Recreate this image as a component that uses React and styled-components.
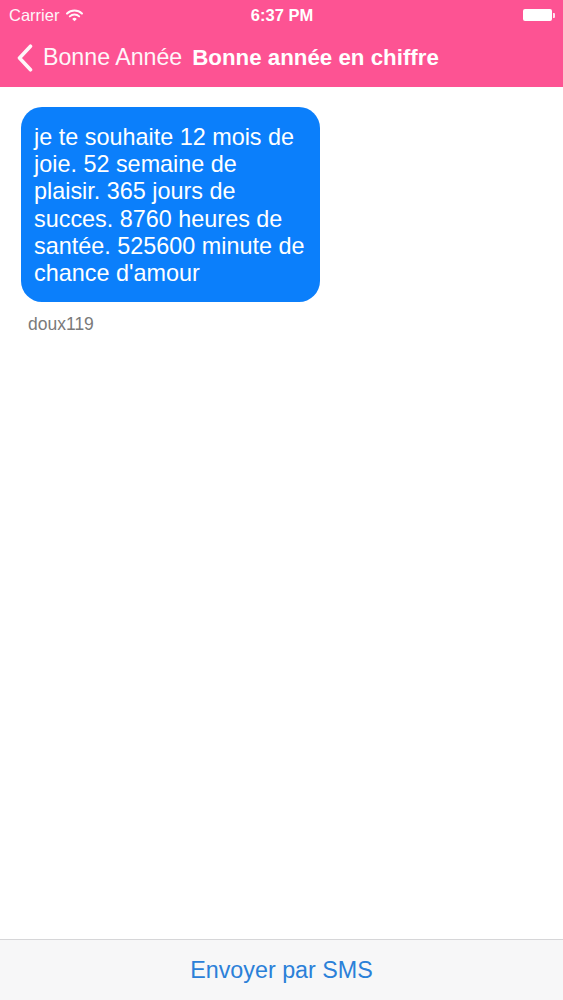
import React from "react";
import styled, { createGlobalStyle } from "styled-components";

const Global = createGlobalStyle`
  html, body { margin: 0; padding: 0; background: #fff; }
  body { font-family: "Liberation Sans", Arial, Helvetica, sans-serif; }
  #root { height: 1000px; }
`;

const Screen = styled.div`
  width: 563px;
  height: 1000px;
  display: flex;
  flex-direction: column;
  background: #fff;
  overflow: hidden;
`;

const Header = styled.header`
  background: #fd5393;
  color: #fff;
  height: 87px;
  display: flex;
  flex-direction: column;
`;

const StatusBar = styled.div`
  height: 30px;
  display: grid;
  grid-template-columns: 1fr auto 1fr;
  align-items: center;
  padding: 0 8px 0 9px;
  font-size: 16.5px;
`;

const Carrier = styled.div`
  display: flex;
  align-items: center;
  gap: 7px;
  opacity: 0.95;
`;

const Time = styled.div`
  font-weight: bold;
  font-size: 16.5px;
`;

const BatteryWrap = styled.div`
  justify-self: end;
  display: flex;
  align-items: center;
`;

const BatteryBody = styled.div`
  width: 29px;
  height: 12px;
  background: #fff;
  border-radius: 2px;
`;

const BatteryNub = styled.div`
  width: 2px;
  height: 5px;
  background: #fff;
  opacity: 0.85;
  margin-left: 1px;
  border-radius: 0 1px 1px 0;
`;

const NavBar = styled.nav`
  flex: 1;
  display: flex;
  align-items: center;
  padding: 0 0 2px 17px;
`;

const Back = styled.div`
  display: flex;
  align-items: center;
  gap: 10px;
  font-size: 23.2px;
  opacity: 0.95;
`;

const Title = styled.div`
  font-weight: bold;
  font-size: 22.3px;
  margin-left: 10px;
`;

const Content = styled.main`
  flex: 1;
  padding: 20px 0 0 21px;
  display: flex;
  flex-direction: column;
  align-items: flex-start;
`;

const Bubble = styled.div`
  background: #0b7ffb;
  color: #fff;
  width: 299px;
  box-sizing: border-box;
  border-radius: 21px;
  padding: 17px 11px 15px 13px;
  font-size: 23.4px;
  line-height: 27.2px;
`;

const Author = styled.div`
  margin: 12px 0 0 7px;
  font-size: 17.5px;
  color: #7a7a7a;
`;

const Footer = styled.footer`
  height: 60px;
  border-top: 1px solid #d6d6d8;
  background: #f7f7f8;
  display: flex;
  align-items: center;
  justify-content: center;
`;

const SmsButton = styled.button`
  border: none;
  background: none;
  font-family: inherit;
  font-size: 23.3px;
  color: #2b80d8;
  padding: 0;
  margin-top: 1px;
  cursor: pointer;
`;

const Wifi = () => (
  <svg width="17" height="13" viewBox="0 0 16 12">
    <path d="M1 4.2 A10 10 0 0 1 15 4.2" stroke="#fff" strokeWidth="1.9" fill="none" strokeLinecap="round" />
    <path d="M3.6 6.8 A6.3 6.3 0 0 1 12.4 6.8" stroke="#fff" strokeWidth="1.9" fill="none" strokeLinecap="round" />
    <path d="M8 11.5 L5.8 9.2 A3 3 0 0 1 10.2 9.2 Z" fill="#fff" />
  </svg>
);

const Chevron = () => (
  <svg width="16" height="28" viewBox="0 0 16 28">
    <path d="M13.5 2.2 L2.5 14 L13.5 25.8" stroke="#fff" strokeWidth="3.6" fill="none" strokeLinecap="round" strokeLinejoin="round" />
  </svg>
);

export default function App() {
  return (
    <Screen>
      <Global />
      <Header>
        <StatusBar>
          <Carrier>
            Carrier <Wifi />
          </Carrier>
          <Time>6:37 PM</Time>
          <BatteryWrap>
            <BatteryBody />
            <BatteryNub />
          </BatteryWrap>
        </StatusBar>
        <NavBar>
          <Back>
            <Chevron />
            <span>Bonne Année</span>
          </Back>
          <Title>Bonne année en chiffre</Title>
        </NavBar>
      </Header>
      <Content>
        <Bubble>
          je te souhaite 12 mois de joie. 52 semaine de plaisir. 365 jours de succes. 8760 heures de santée. 525600 minute de chance d'amour
        </Bubble>
        <Author>doux119</Author>
      </Content>
      <Footer>
        <SmsButton>Envoyer par SMS</SmsButton>
      </Footer>
    </Screen>
  );
}
